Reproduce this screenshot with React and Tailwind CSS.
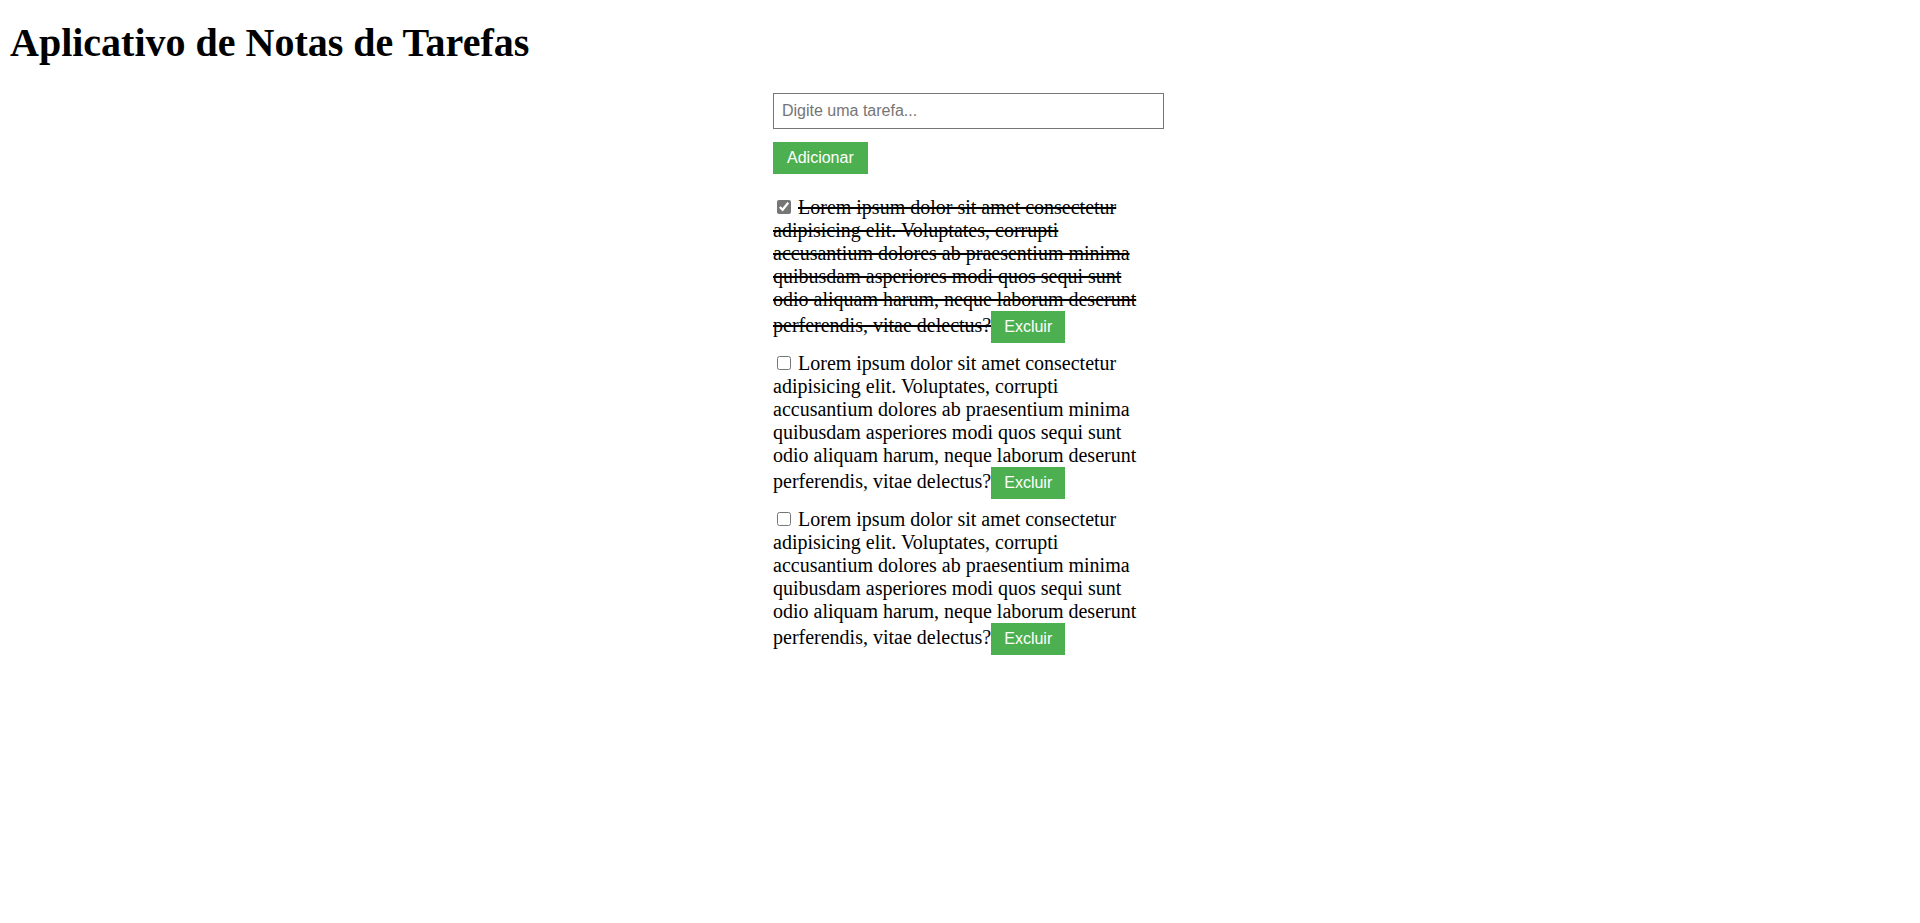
import React, { useState } from "react";

const LOREM =
  "Lorem ipsum dolor sit amet consectetur adipisicing elit. Voluptates, corrupti accusantium dolores ab praesentium minima quibusdam asperiores modi quos sequi sunt odio aliquam harum, neque laborum deserunt perferendis, vitae delectus?";

export default function App() {
  const [tasks, setTasks] = useState([
    { id: 1, text: LOREM, done: true },
    { id: 2, text: LOREM, done: false },
    { id: 3, text: LOREM, done: false },
  ]);
  const [value, setValue] = useState("");

  const toggle = (id) =>
    setTasks((t) => t.map((x) => (x.id === id ? { ...x, done: !x.done } : x)));
  const remove = (id) => setTasks((t) => t.filter((x) => x.id !== id));
  const add = () => {
    if (!value.trim()) return;
    setTasks((t) => [...t, { id: Date.now(), text: value, done: false }]);
    setValue("");
  };

  return (
    <div className="min-h-[923px] bg-white text-black font-['Liberation_Serif','Times_New_Roman',serif] text-[20px] leading-[normal]">
      <h1 className="ml-[10px] pt-[19px] text-[40px] font-bold leading-[normal]">
        Aplicativo de Notas de Tarefas
      </h1>
      <div className="w-[374px] mx-auto mt-[27px]">
        <input
          type="text"
          value={value}
          onChange={(e) => setValue(e.target.value)}
          placeholder="Digite uma tarefa..."
          className="block box-border w-[391px] h-[36px] border border-[#767676] px-[8px] text-[16px] font-['Liberation_Sans',Arial,sans-serif] placeholder:text-[#757575] outline-none"
        />
        <button
          onClick={add}
          className="block mt-[13px] h-[32px] px-[14px] bg-[#4CAF50] text-white text-[16px] leading-[18px] font-['Liberation_Sans',Arial,sans-serif]"
        >
          Adicionar
        </button>
        <ul className="mt-[22px] flex flex-col gap-[9px]">
          {tasks.map((t) => (
            <li key={t.id} className="leading-[normal]">
              <input
                type="checkbox"
                checked={t.done}
                onChange={() => toggle(t.id)}
                className="inline-block w-[14px] h-[14px] ml-[4px] mr-[2px] my-[3px] align-baseline accent-[#767676]"
              />{" "}
              <span className={t.done ? "line-through" : ""}>{t.text}</span>
              <button
                onClick={() => remove(t.id)}
                className="inline-block py-[7px] px-[13px] bg-[#4CAF50] text-white text-[16px] leading-[18px] font-['Liberation_Sans',Arial,sans-serif] align-baseline"
              >
                Excluir
              </button>
            </li>
          ))}
        </ul>
      </div>
    </div>
  );
}
